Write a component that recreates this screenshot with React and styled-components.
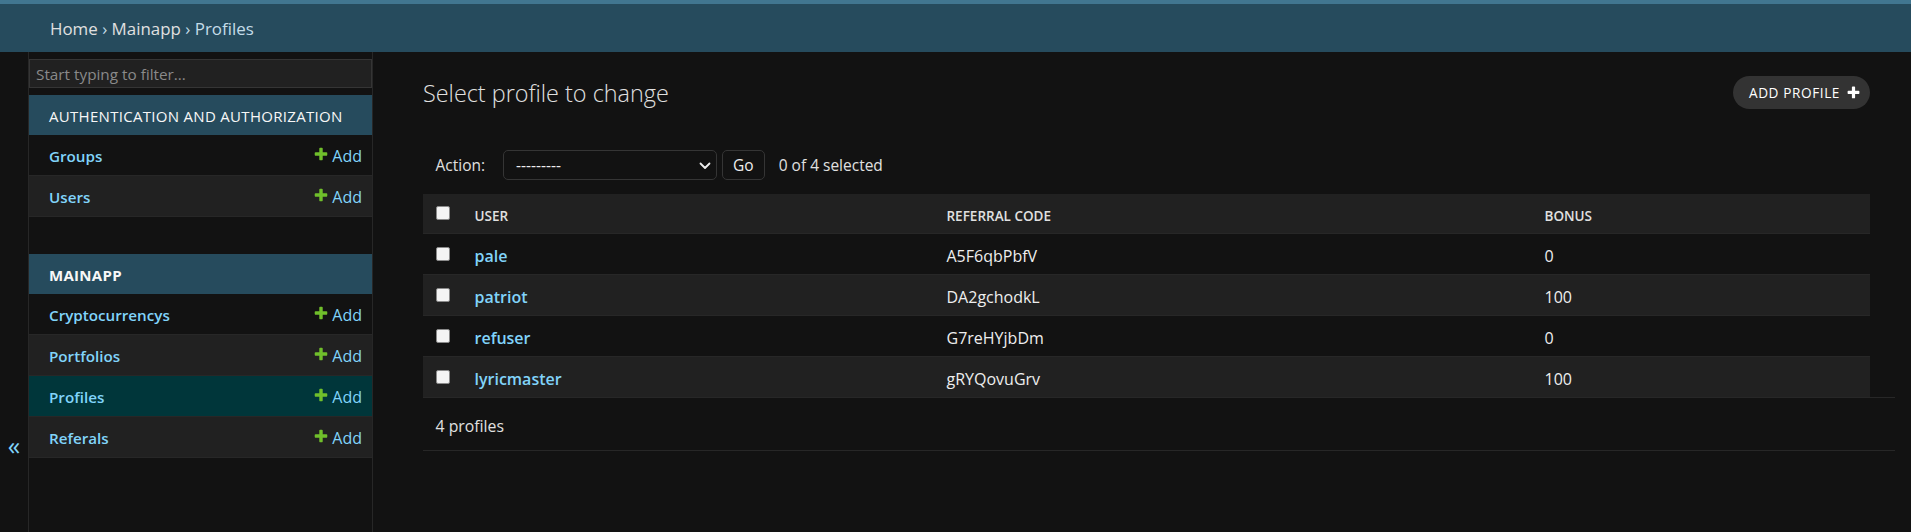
import React from "react";
import styled, { createGlobalStyle } from "styled-components";

const GlobalStyle = createGlobalStyle`
  html, body {
    margin: 0;
    padding: 0;
    background: #121212;
    color: #eeeeee;
    font-family: "Open Sans", "Noto Sans", sans-serif;
  }
  * { box-sizing: border-box; }
`;

const PLUS_PATH =
  "M1600 796v192q0 40-28 68t-68 28h-416v416q0 40-28 68t-68 28h-192q-40 0-68-28t-28-68v-416h-416q-40 0-68-28t-28-68v-192q0-40 28-68t68-28h416v-416q0-40 28-68t68-28h192q40 0 68 28t28 68v416h416q40 0 68 28t28 68z";

function PlusIcon({ color = "#70bf2b", size = 16 }) {
  return (
    <svg width={size} height={size} viewBox="0 0 1792 1792">
      <path fill={color} d={PLUS_PATH} />
    </svg>
  );
}

const Breadcrumbs = styled.div`
  background: #264b5d;
  border-top: 4px solid #417690;
  height: 52px;
  padding: 0 50px;
  display: flex;
  align-items: center;
  font-size: 16.9px;
  color: #c4dce8;
  a { color: #e0e0e0; text-decoration: none; }
`;

const Main = styled.div`
  display: flex;
  min-height: 480px;
`;

const Toggle = styled.div`
  flex: 0 0 29px;
  border-right: 1px solid #272727;
  display: flex;
  justify-content: center;
  padding-top: 378px;
  color: #81d4fa;
  font-size: 25px;
  line-height: 30px;
`;

const Sidebar = styled.nav`
  flex: 0 0 344px;
  border-right: 1px solid #272727;
`;

const Filter = styled.input`
  display: block;
  width: 100%;
  height: 29px;
  margin: 7px 0;
  padding: 2px 6px;
  border: 1px solid #353535;
  background: #212121;
  color: #eeeeee;
  font-family: inherit;
  font-size: 15.3px;
  &::placeholder { color: #8a8a8a; }
`;

const Module = styled.table`
  width: 100%;
  border-collapse: collapse;
  margin-bottom: 37px;
`;

const Caption = styled.caption`
  background: #264b5d;
  color: #f7f7f7;
  text-align: left;
  padding: 11px 20px 9px;
  line-height: 20px;
  font-size: 15px;
  letter-spacing: 0.3px;
  white-space: nowrap;
  text-transform: uppercase;
  font-weight: ${(p) => (p.$current ? 700 : 400)};
`;

const NavRow = styled.tr`
  background: ${(p) => (p.$current ? "#00363a" : p.$odd ? "#212121" : "#121212")};
  th, td {
    padding: 11px 10px 9px 20px;
    line-height: 20px;
    font-size: 15.2px;
    border-bottom: 1px solid #272727;
  }
  th {
    text-align: left;
    font-weight: 600;
    width: 100%;
  }
  td { padding-left: 0; white-space: nowrap; font-size: 16px; }
  a { color: #81d4fa; text-decoration: none; }
`;

const AddLink = styled.a`
  display: inline-flex;
  align-items: flex-start;
  vertical-align: top;
  height: 20px;
  gap: 3px;
  svg { margin-top: 0; flex: none; }
`;

const Content = styled.div`
  flex: 1;
  padding: 24px 41px 25px 50px;
`;

const TitleRow = styled.div`
  display: flex;
  justify-content: space-between;
  align-items: center;
  height: 33px;
`;

const Title = styled.h1`
  margin: 0;
  font-size: 23.4px;
  font-weight: 300;
  color: #e0e0e0;
`;

const ObjectTool = styled.a`
  display: inline-flex;
  align-items: center;
  gap: 6px;
  height: 33px;
  padding: 0 9px 0 16px;
  background: #333333;
  border-radius: 17px;
  color: #ffffff;
  font-size: 13.6px;
  letter-spacing: 0.6px;
  text-transform: uppercase;
  text-decoration: none;
`;

const ActionsBar = styled.div`
  margin-top: 28px;
  padding: 13px 12.5px 14px;
  display: flex;
  align-items: center;
  gap: 5px;
  font-size: 15.5px;
  color: #e0e0e0;
`;

const ActionLabel = styled.label`
  margin-right: 13px;
`;

const SelectWrap = styled.span`
  position: relative;
  display: inline-flex;
  svg {
    position: absolute;
    right: 6px;
    top: 12px;
    pointer-events: none;
  }
`;

const Select = styled.select`
  appearance: none;
  width: 214px;
  height: 30px;
  padding: 0 12px;
  background: #121212;
  color: #eeeeee;
  border: 1px solid #353535;
  border-radius: 5px;
  font-family: inherit;
  font-size: 15.5px;
`;

const GoButton = styled.button`
  height: 30px;
  padding: 0 10px;
  background: #121212;
  color: #eeeeee;
  border: 1px solid #353535;
  border-radius: 5px;
  font-family: inherit;
  font-size: 15.5px;
`;

const Counter = styled.span`
  margin-left: 9px;
`;

const Results = styled.table`
  width: 100%;
  border-collapse: collapse;
  font-size: 16px;
  th, td {
    text-align: left;
    padding: 12px 12.5px 8px;
    line-height: 20px;
    border-bottom: 1px solid #272727;
    vertical-align: middle;
  }
  thead th {
    background: #212121;
    font-size: 13.5px;
    font-weight: 600;
    text-transform: uppercase;
    color: #e0e0e0;
    padding: 12px 12.5px 7px;
  }
  tbody th { font-weight: 600; }
  a { color: #81d4fa; text-decoration: none; }
`;

const ResultRow = styled.tr`
  background: ${(p) => (p.$odd ? "#212121" : "#121212")};
`;

const CheckCell = styled.td`
  width: 39px;
  && { padding: 0 0 0 13px; }
`;

const Check = styled.input`
  appearance: none;
  display: block;
  width: 14px;
  height: 14px;
  margin: -1px 0 0 0;
  background: #f4f4f4;
  border: 1px solid #8a8a8a;
  border-radius: 2px;
`;

const Paginator = styled.p`
  margin: 0 -25px 0 0;
  padding: 17px 12.5px 13px;
  line-height: 22px;
  font-size: 15.8px;
  color: #e0e0e0;
  border-top: 1px solid #272727;
  border-bottom: 1px solid #272727;
  position: relative;
  top: -1px;
`;

const apps = [
  {
    name: "Authentication and Authorization",
    models: ["Groups", "Users"],
  },
  {
    name: "Mainapp",
    current: true,
    models: ["Cryptocurrencys", "Portfolios", "Profiles", "Referals"],
  },
];

const profiles = [
  { user: "pale", code: "A5F6qbPbfV", bonus: 0 },
  { user: "patriot", code: "DA2gchodkL", bonus: 100 },
  { user: "refuser", code: "G7reHYjbDm", bonus: 0 },
  { user: "lyricmaster", code: "gRYQovuGrv", bonus: 100 },
];

export default function App() {
  return (
    <>
      <GlobalStyle />
      <Breadcrumbs>
        <a href="#">Home</a>&nbsp;›&nbsp;<a href="#">Mainapp</a>&nbsp;›&nbsp;Profiles
      </Breadcrumbs>
      <Main>
        <Toggle>«</Toggle>
        <Sidebar>
          <Filter placeholder="Start typing to filter..." />
          {apps.map((app) => (
            <Module key={app.name}>
              <Caption $current={app.current}>{app.name}</Caption>
              <tbody>
                {app.models.map((m, i) => (
                  <NavRow key={m} $odd={i % 2 === 1} $current={m === "Profiles"}>
                    <th scope="row"><a href="#">{m}</a></th>
                    <td>
                      <AddLink href="#"><PlusIcon />Add</AddLink>
                    </td>
                  </NavRow>
                ))}
              </tbody>
            </Module>
          ))}
        </Sidebar>
        <Content>
          <TitleRow>
            <Title>Select profile to change</Title>
            <ObjectTool href="#">
              Add profile <PlusIcon color="#ffffff" size={15} />
            </ObjectTool>
          </TitleRow>
          <ActionsBar>
            <ActionLabel>Action:</ActionLabel>
            <SelectWrap>
              <Select defaultValue="">
                <option value="">---------</option>
              </Select>
              <svg width="12" height="8" viewBox="0 0 12 8">
                <path d="M1.5 1.5 6 6l4.5-4.5" fill="none" stroke="#eeeeee" strokeWidth="1.8" strokeLinecap="round" strokeLinejoin="round" />
              </svg>
            </SelectWrap>
            <GoButton>Go</GoButton>
            <Counter>0 of 4 selected</Counter>
          </ActionsBar>
          <Results>
            <thead>
              <tr>
                <CheckCell as="th"><Check type="checkbox" /></CheckCell>
                <th style={{ width: 472 }}>User</th>
                <th style={{ width: 598 }}>Referral code</th>
                <th>Bonus</th>
              </tr>
            </thead>
            <tbody>
              {profiles.map((p, i) => (
                <ResultRow key={p.user} $odd={i % 2 === 1}>
                  <CheckCell><Check type="checkbox" /></CheckCell>
                  <th><a href="#">{p.user}</a></th>
                  <td>{p.code}</td>
                  <td>{p.bonus}</td>
                </ResultRow>
              ))}
            </tbody>
          </Results>
          <Paginator>4 profiles</Paginator>
        </Content>
      </Main>
    </>
  );
}
